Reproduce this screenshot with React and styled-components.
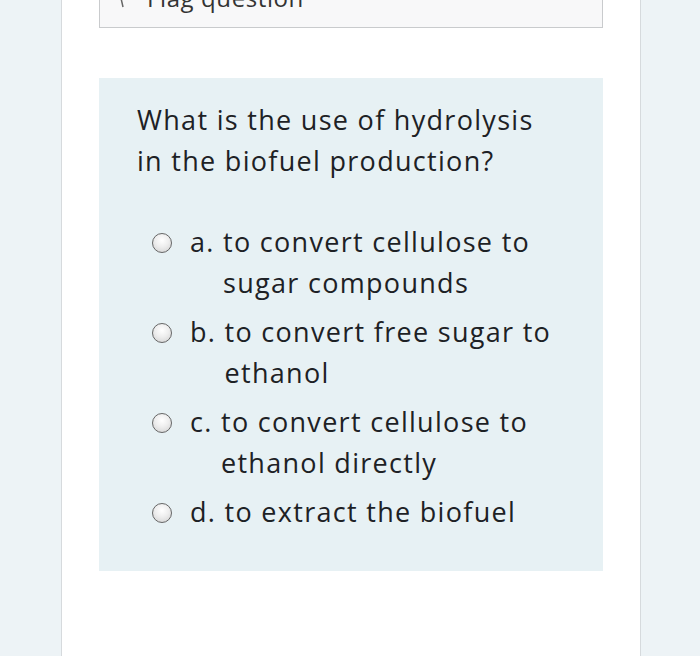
import styled, { createGlobalStyle } from "styled-components";

const GlobalStyle = createGlobalStyle`
  html, body {
    margin: 0;
    padding: 0;
    background: #edf3f6;
    font-family: "Open Sans", "Liberation Sans", sans-serif;
    color: #1d2125;
  }
`;

const Page = styled.div`
  width: 700px;
  height: 656px;
  overflow: hidden;
  display: flex;
`;

const Card = styled.div`
  margin-left: 61px;
  width: 580px;
  height: 656px;
  background: #ffffff;
  border-left: 1px solid #d6dadd;
  border-right: 1px solid #d6dadd;
  padding: 0 37px;
  box-sizing: border-box;
`;

const FlagBox = styled.div`
  height: 28px;
  background: #f8f8f9;
  border: 1px solid #c9cbcd;
  border-top: none;
  box-sizing: border-box;
  overflow: hidden;
  display: flex;
  align-items: flex-end;
  gap: 20px;
  padding-left: 19px;
`;

const FlagText = styled.span`
  font-size: 24px;
  line-height: 24px;
  letter-spacing: 0.6px;
  color: #333;
  margin-bottom: 17px;
`;

const FlagIcon = styled.svg`
  margin-bottom: 19px;
  flex: none;
`;

const QuestionBox = styled.div`
  margin-top: 50px;
  background: #e7f1f4;
  padding: 21px 38px 38px 38px;
  height: 493px;
  box-sizing: border-box;
`;

const QuestionText = styled.p`
  margin: 0;
  font-size: 27px;
  line-height: 41px;
  letter-spacing: 1.3px;
  width: 405px;
`;

const Options = styled.div`
  margin-top: 40px;
  padding-left: 15px;
  display: flex;
  flex-direction: column;
  gap: 8px;
`;

const OptionRow = styled.label`
  display: flex;
  align-items: flex-start;
  font-size: 27px;
  line-height: 41px;
  letter-spacing: 1.3px;
`;

const Radio = styled.span`
  flex: none;
  width: 20px;
  height: 20px;
  margin-top: 12px;
  margin-right: 18px;
  border-radius: 50%;
  border: 1.5px solid #666;
  box-sizing: border-box;
  background: radial-gradient(circle at 50% 35%, #ffffff 0%, #eeeeee 45%, #cfcfcf 100%);
`;

const Letter = styled.span`
  flex: none;
  white-space: pre;
`;

const OptionText = styled.span`
  width: 335px;
`;

const options = [
  { l: "a. ", t: "to convert cellulose to sugar compounds" },
  { l: "b. ", t: "to convert free sugar to ethanol" },
  { l: "c. ", t: "to convert cellulose to ethanol directly" },
  { l: "d. ", t: "to extract the biofuel" },
];

export default function App() {
  return (
    <Page>
      <GlobalStyle />
      <Card>
        <FlagBox>
          <FlagIcon width="8" height="12" viewBox="0 0 8 12">
            <path d="M1.5 0 L4 11" stroke="#666" strokeWidth="1.5" fill="none" />
          </FlagIcon>
          <FlagText>Flag question</FlagText>
        </FlagBox>
        <QuestionBox>
          <QuestionText>What is the use of hydrolysis in the biofuel production?</QuestionText>
          <Options>
            {options.map((o) => (
              <OptionRow key={o.l}>
                <Radio />
                <Letter>{o.l}</Letter>
                <OptionText>{o.t}</OptionText>
              </OptionRow>
            ))}
          </Options>
        </QuestionBox>
      </Card>
    </Page>
  );
}
